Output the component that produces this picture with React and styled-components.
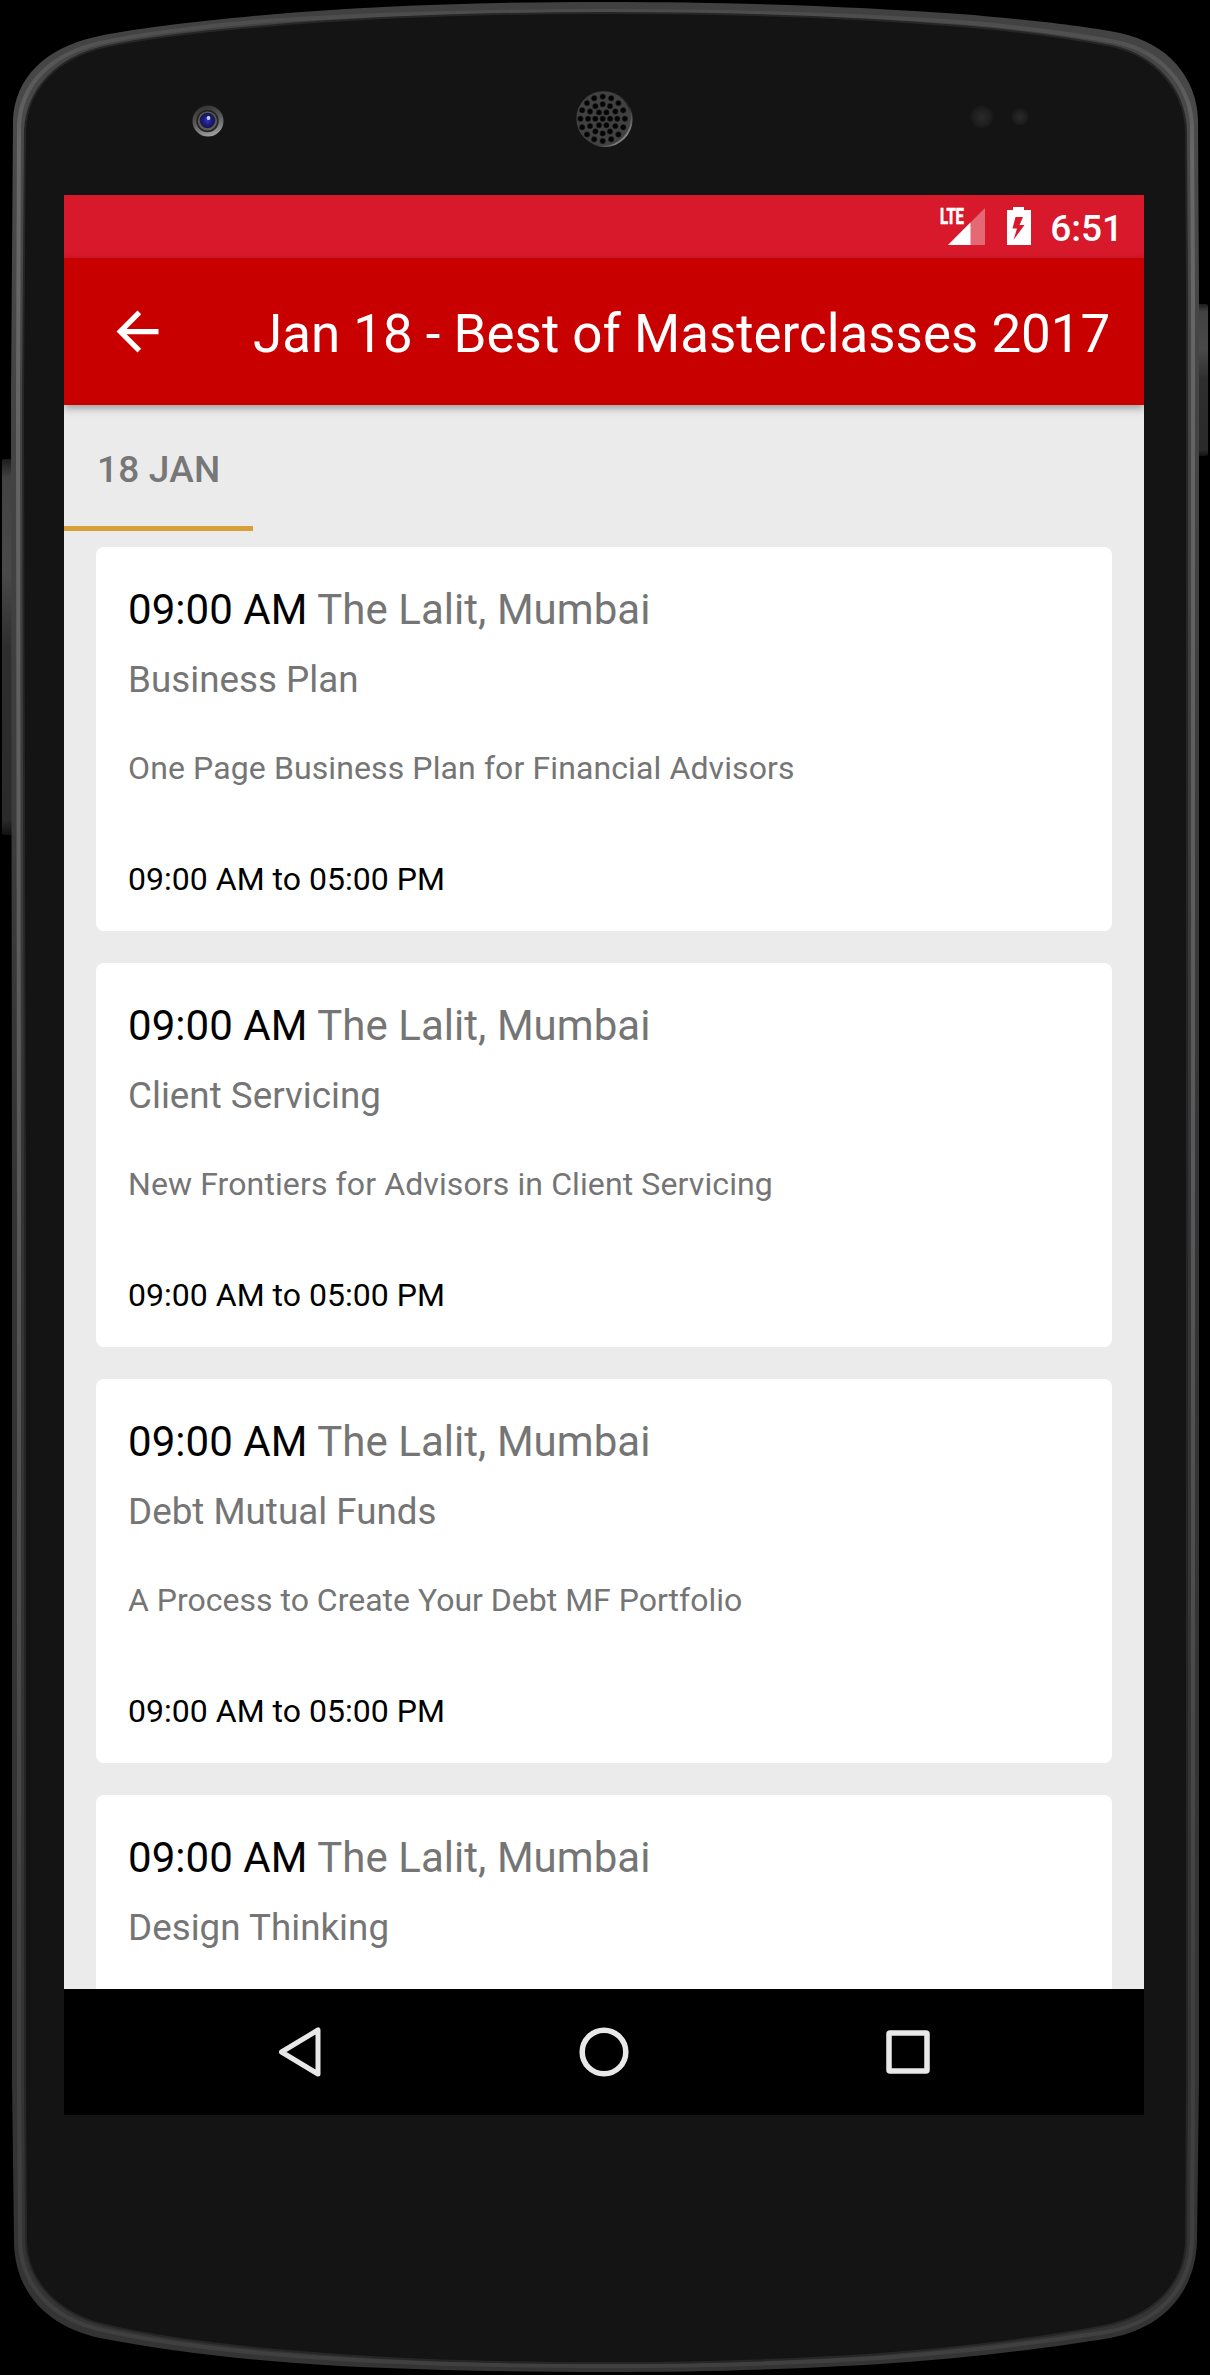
import React from "react";
import styled, { createGlobalStyle } from "styled-components";

const GlobalStyle = createGlobalStyle`
  body { margin: 0; background: #000; font-family: Roboto, "Liberation Sans", sans-serif; }
  * { box-sizing: border-box; }
`;

const Device = styled.main`
  position: relative;
  width: 1210px;
  height: 2375px;
  padding: 195px 66px 260px 64px;
  background: #000;
  overflow: hidden;
`;

const Shell = styled.svg`
  position: absolute;
  inset: 0;
  width: 1210px;
  height: 2375px;
`;

const Screen = styled.section`
  position: relative;
  display: flex;
  flex-direction: column;
  width: 1080px;
  height: 1920px;
  background: #ebebeb;
  overflow: hidden;
`;

const StatusBar = styled.div`
  flex: none;
  display: flex;
  align-items: flex-start;
  justify-content: flex-end;
  height: 63px;
  padding-right: 21px;
  background: #d8182b;
  color: #fff;
`;

const StatusIcons = styled.svg`
  width: 110px;
  height: 63px;
  margin-right: 1px;
`;

const Clock = styled.time`
  padding-top: 12px;
  font-size: 37px;
  line-height: 44px;
  font-weight: 500;
`;

const AppBar = styled.header`
  flex: none;
  position: relative;
  z-index: 1;
  display: flex;
  align-items: center;
  height: 147px;
  padding-left: 42px;
  background: #c80000;
  color: #fff;
  box-shadow: 0 3px 8px rgba(0, 0, 0, 0.36);
`;

const BackButton = styled.button`
  display: flex;
  width: 63px;
  height: 63px;
  margin-right: 84px;
  padding: 0;
  border: 0;
  background: none;
  color: inherit;
`;

const Title = styled.h1`
  margin: 5px 0 0;
  font-size: 52.9px;
  line-height: 62px;
  font-weight: 400;
  white-space: nowrap;
`;

const Tabs = styled.nav`
  flex: none;
  display: flex;
  height: 126px;
`;

const Tab = styled.a`
  width: 189px;
  padding: 43px 0 0 33px;
  border-bottom: 5px solid #d8a039;
  color: #777;
  font-size: 37px;
  line-height: 44px;
  font-weight: 500;
  letter-spacing: 0.2px;
  white-space: nowrap;
`;

const Sessions = styled.div`
  flex: 1;
  min-height: 0;
  display: flex;
  flex-direction: column;
  gap: 32px;
  padding: 16px 32px 0;
  overflow: hidden;
`;

const Card = styled.article`
  flex: none;
  height: 384px;
  padding: 38px 32px 0;
  border-radius: 8px;
  background: #fff;
`;

const Line = styled.p`
  margin: ${(p) => p.$gap || 0}px 0 0;
  color: ${(p) => (p.$strong ? "#000" : "#757575")};
  font-size: ${(p) => p.$size}px;
  line-height: ${(p) => p.$height}px;
  letter-spacing: ${(p) => p.$tracking || 0}px;
  white-space: nowrap;
`;

const Start = styled.span`
  color: #000;
`;

const NavBar = styled.footer`
  flex: none;
  display: flex;
  justify-content: center;
  height: 126px;
  background: #000;
`;

const NavButton = styled.button`
  display: flex;
  align-items: center;
  justify-content: center;
  width: 304px;
  padding: 0;
  border: 0;
  background: none;
`;

const sessions = [
  { topic: "Business Plan", about: "One Page Business Plan for Financial Advisors", hours: "09:00 AM to 05:00 PM", tracking: 0.11 },
  { topic: "Client Servicing", about: "New Frontiers for Advisors in Client Servicing", hours: "09:00 AM to 05:00 PM", tracking: 0.11 },
  { topic: "Debt Mutual Funds", about: "A Process to Create Your Debt MF Portfolio", hours: "09:00 AM to 05:00 PM", tracking: 0 },
  { topic: "Design Thinking" },
];

const OUTER =
  "M605 2 C740 2 860 7 960 14 C1010 18 1080 25 1120 33 C1168 43 1197 78 1198 120 L1199 300 V2080 L1197 2240 C1196 2290 1165 2328 1110 2338 C1050 2348 960 2359 880 2364 C780 2370 700 2372 605 2372 C510 2372 420 2370 340 2366 C240 2360 160 2350 100 2338 C45 2326 14 2290 14 2240 L12 2080 V1200 L11 400 L13 120 C15 78 45 48 95 37 C130 29 200 21 265 15 C370 6 480 2 605 2 Z";
const INNER =
  "M605 13 C740 13 860 18 960 26 C1010 30 1070 38 1112 46 C1155 56 1184 88 1186 130 L1187 300 V2080 L1186 2245 C1183 2285 1154 2316 1104 2326 C1050 2337 960 2348 880 2354 C780 2361 700 2363 605 2363 C510 2363 420 2361 340 2355 C240 2348 160 2338 105 2325 C58 2314 27 2282 26 2240 L25 2080 V1200 L23 400 L25 130 C27 90 56 58 104 47 C140 39 205 31 265 26 C370 17 480 13 605 13 Z";
const MID =
  "M605 11 C740 11 860 15 960 22 C1010 26 1075 34 1116 42 C1160 51 1190 84 1192 125 L1193 300 V2080 L1192 2242 C1190 2288 1160 2322 1107 2332 C1050 2341 960 2352 880 2358 C780 2364 700 2366 605 2366 C510 2366 420 2364 340 2359 C240 2353 160 2343 102 2330 C52 2319 21 2286 20 2240 L19 2080 V1200 L18 400 L19 125 C21 84 51 54 100 43 C135 35 203 26 265 21 C370 14 480 11 605 11 Z";

const ring = (count, radius) =>
  Array.from({ length: count }, (_, i) => {
    const a = (i / count) * Math.PI * 2;
    return [602.7 + radius * Math.cos(a), 118.8 + radius * Math.sin(a)];
  });

const speakerHoles = [[602.7, 118.8], ...ring(6, 7.4), ...ring(12, 14.6), ...ring(16, 22.2)];

function DeviceShell() {
  return (
    <Shell viewBox="0 0 1210 2375" aria-hidden="true">
      <defs>
        <linearGradient id="rim" x1="0" y1="0" x2="0" y2="1">
          <stop offset="0" stopColor="#404040" />
          <stop offset="0.05" stopColor="#4a4a4a" />
          <stop offset="0.5" stopColor="#343434" />
          <stop offset="1" stopColor="#343434" />
        </linearGradient>
        <linearGradient id="gloss" x1="0" y1="0" x2="0" y2="1">
          <stop offset="0" stopColor="#4c4c4c" />
          <stop offset="0.06" stopColor="#686868" />
          <stop offset="0.5" stopColor="#58585a" />
          <stop offset="0.85" stopColor="#404040" />
          <stop offset="1" stopColor="#404040" />
        </linearGradient>
        <linearGradient id="key" x1="0" y1="0" x2="0" y2="1">
          <stop offset="0" stopColor="#1c1c1c" />
          <stop offset="0.05" stopColor="#424242" />
          <stop offset="0.3" stopColor="#4a4a4a" />
          <stop offset="0.5" stopColor="#2e2e2e" />
          <stop offset="0.96" stopColor="#2a2a2a" />
          <stop offset="1" stopColor="#111" />
        </linearGradient>
        <linearGradient id="lensRim" x1="0.3" y1="0" x2="0.6" y2="1">
          <stop offset="0" stopColor="#303030" />
          <stop offset="0.5" stopColor="#5c5c5c" />
          <stop offset="1" stopColor="#a0a0a0" />
        </linearGradient>
        <radialGradient id="lens">
          <stop offset="0" stopColor="#3434b4" />
          <stop offset="0.6" stopColor="#191980" />
          <stop offset="1" stopColor="#1c1c30" />
        </radialGradient>
        <radialGradient id="sensor">
          <stop offset="0" stopColor="#2a2a2a" />
          <stop offset="0.75" stopColor="#1d1d1d" />
          <stop offset="1" stopColor="#151515" />
        </radialGradient>
        <linearGradient id="grille" x1="0" y1="0" x2="1" y2="1">
          <stop offset="0.6" stopColor="#222" />
          <stop offset="0.9" stopColor="#999" />
        </linearGradient>
      </defs>
      <rect x="2" y="459" width="12" height="376" rx="2" fill="url(#key)" />
      <rect x="1196" y="304" width="12" height="152" rx="2" fill="url(#key)" />
      <path d={OUTER} fill="url(#rim)" />
      <path d={MID} fill="none" stroke="url(#gloss)" strokeWidth="4" />
      <path d={INNER} fill="#141414" stroke="#262626" strokeWidth="2" />
      <circle cx="208" cy="121" r="15.5" fill="url(#lensRim)" />
      <circle cx="207.5" cy="121" r="11.2" fill="#242424" />
      <circle cx="207.5" cy="121" r="9.6" fill="#5c5c66" />
      <circle cx="207.5" cy="120.5" r="7.8" fill="url(#lens)" />
      <circle cx="208.5" cy="118" r="1.9" fill="#c5d4f4" />
      <circle cx="604.8" cy="119.2" r="27.8" fill="url(#grille)" />
      <circle cx="603.5" cy="118.5" r="27.2" fill="#414141" />
      {speakerHoles.map(([x, y], i) => (
        <circle key={i} cx={x} cy={y} r="2.7" fill="#030303" stroke="#1c1c1c" strokeWidth="0.6" />
      ))}
      <circle cx="982" cy="117" r="12" fill="url(#sensor)" />
      <circle cx="1020" cy="117" r="9" fill="url(#sensor)" />
    </Shell>
  );
}

function SessionCard({ topic, about, hours, tracking }) {
  return (
    <Card>
      <Line $size={42} $height={50} $tracking={0.05}>
        <Start>09:00 AM</Start> The Lalit, Mumbai
      </Line>
      <Line $size={36.75} $height={44} $gap={23} $tracking={0.02}>{topic}</Line>
      {about && <Line $size={32} $height={38} $gap={47} $tracking={tracking}>{about}</Line>}
      {hours && <Line $size={32} $height={38} $gap={73} $tracking={0.02} $strong>{hours}</Line>}
    </Card>
  );
}

export default function App() {
  return (
    <>
      <GlobalStyle />
      <Device>
        <DeviceShell />
        <Screen>
          <StatusBar>
            <StatusIcons viewBox="0 0 110 63">
              <text x="1" y="29" fill="#fff" stroke="#fff" strokeWidth="0.7" fontFamily="Roboto, sans-serif" fontWeight="700" fontSize="22" textLength="24" lengthAdjust="spacingAndGlyphs">LTE</text>
              <path d="M46 13 V50 H9 Z" fill="#fff" fillOpacity="0.35" />
              <path d="M31.500 27.500 V50 H9 Z" fill="#fff" />
              <path fill="#fff" fillRule="evenodd" d="M74 12 H85 V15 H92 V50 H68 V15 H74 Z M76.500 22 L73.500 33.500 H78 L74.500 45 L85.500 30 H80.500 L84 22 Z" />
            </StatusIcons>
            <Clock>6:51</Clock>
          </StatusBar>
          <AppBar>
            <BackButton aria-label="Back">
              <svg width="63" height="63" viewBox="0 0 24 24" fill="currentColor">
                <path d="M20 11H7.830l5.590-5.590L12 4l-8 8 8 8 1.410-1.410L7.830 13H20v-2z" />
              </svg>
            </BackButton>
            <Title>Jan 18 - Best of Masterclasses 2017</Title>
          </AppBar>
          <Tabs>
            <Tab>18 JAN</Tab>
          </Tabs>
          <Sessions>
            {sessions.map((s) => (
              <SessionCard key={s.topic} {...s} />
            ))}
          </Sessions>
          <NavBar>
            <NavButton aria-label="Back">
              <svg width="50" height="50" viewBox="0 0 50 50">
                <path d="M43 3 V47 L6.500 25 Z" fill="none" stroke="#e8e8e8" strokeWidth="5" strokeLinejoin="round" />
              </svg>
            </NavButton>
            <NavButton aria-label="Home">
              <svg width="50" height="50" viewBox="0 0 50 50">
                <circle cx="25" cy="25" r="21.800" fill="none" stroke="#e8e8e8" strokeWidth="5.500" />
              </svg>
            </NavButton>
            <NavButton aria-label="Recent apps">
              <svg width="50" height="50" viewBox="0 0 50 50">
                <rect x="6" y="6" width="38" height="38" rx="1" fill="none" stroke="#e8e8e8" strokeWidth="5.500" strokeLinejoin="round" />
              </svg>
            </NavButton>
          </NavBar>
        </Screen>
      </Device>
    </>
  );
}
